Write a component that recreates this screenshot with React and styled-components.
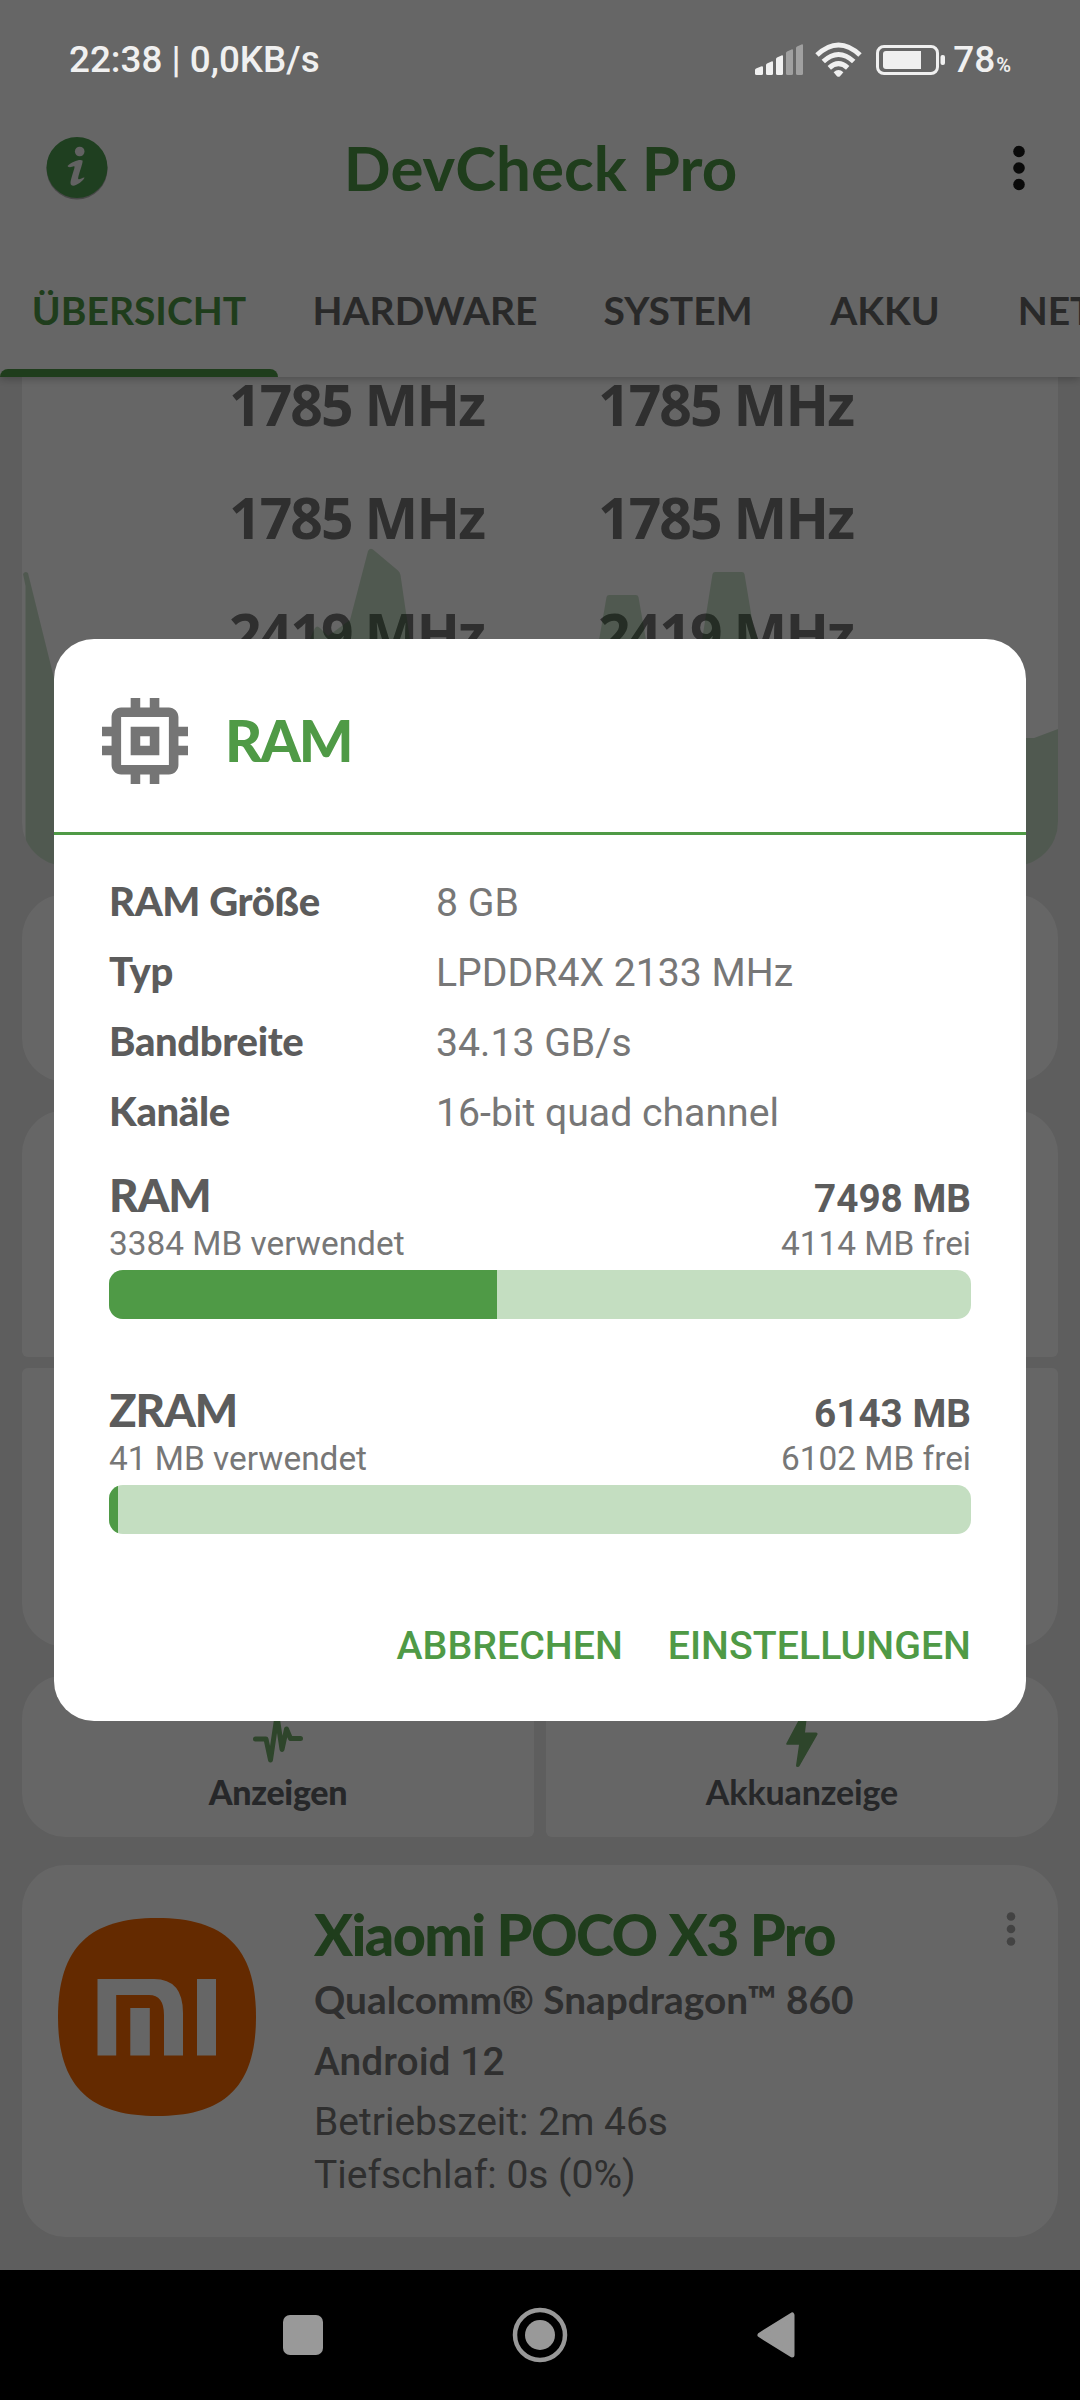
import React from 'react';
import styled, { createGlobalStyle } from 'styled-components';

const GREEN = '#4f9a46';

const GlobalStyle = createGlobalStyle`
  * {
    box-sizing: border-box;
  }

  body {
    margin: 0;
    background: #000000;
    font-family: Roboto, sans-serif;
  }
`;

const Screen = styled.div`
  position: relative;
  display: flex;
  flex-direction: column;
  width: 1080px;
  height: 2400px;
  overflow: hidden;
  background: #ebebeb;
`;

/* status bar */

const StatusBar = styled.div`
  position: absolute;
  z-index: 3;
  top: 0;
  left: 0;
  display: flex;
  align-items: center;
  justify-content: space-between;
  width: 100%;
  height: 90px;
  padding: 29px 69px 0 69px;
  color: #f0f0f0;
`;

const Clock = styled.span`
  font-size: 36.8px;
  font-weight: 500;
  line-height: 64px;
  white-space: pre;
`;

const StatusIcons = styled.div`
  display: flex;
  align-items: center;
  height: 64px;
`;

const SignalSvg = styled.svg`
  margin-right: 11px;
`;

const WifiSvg = styled.svg`
  margin-right: 14px;
`;

const BatteryLevel = styled.div`
  display: flex;
  align-items: baseline;
  height: 64px;
  margin-left: 7px;
  font-size: 37px;
  font-weight: 500;
  line-height: 64px;
`;

const Percent = styled.span`
  margin-left: 1px;
  font-size: 20px;
  font-weight: 600;
  line-height: 1;
`;

/* header */

const Header = styled.header`
  position: relative;
  z-index: 1;
  flex: none;
  height: 377px;
  padding-top: 90px;
  background: #ffffff;
  box-shadow: 0 2px 8px rgba(0, 0, 0, 0.25);
`;

const Toolbar = styled.div`
  display: grid;
  grid-template-columns: 64px 1fr 64px;
  align-items: center;
  justify-items: center;
  height: 154px;
  padding: 1px 44px 0 45px;
`;

const AppTitle = styled.h1`
  margin: -2px 0 0;
  font-family: Lato, sans-serif;
  font-size: 61.8px;
  font-weight: 700;
  color: ${GREEN};
`;

const ToolbarMenu = styled.svg`
  justify-self: end;
  margin: 1px 10px 0 0;
`;

const Tabs = styled.nav`
  display: flex;
  width: 1300px;
  height: 133px;
`;

const Tab = styled.div`
  display: flex;
  flex: none;
  flex-direction: column;
  width: ${(props) => props.$width}px;
  font-family: Lato, sans-serif;
  font-size: 39px;
  font-weight: 700;
  line-height: 132px;
  text-align: center;
  color: ${(props) => (props.$active ? GREEN : '#686868')};

  &::after {
    content: '';
    height: 8px;
    margin-top: -7px;
    border-radius: 8px 8px 0 0;
    background: ${(props) => (props.$active ? GREEN : 'transparent')};
  }
`;

/* overview cards */

const Content = styled.main`
  display: flex;
  flex: none;
  flex-direction: column;
  gap: 28px;
  height: 1893px;
  padding: 0 22px;
  overflow: hidden;
`;

const Card = styled.section`
  flex: none;
  height: ${(props) => props.$height}px;
  border-radius: 44px;
  background: #ffffff;
`;

const CpuCard = styled(Card)`
  position: relative;
  overflow: hidden;
  border-radius: 0 0 44px 44px;
`;

const Frequencies = styled.div`
  display: grid;
  grid-template-columns: 252px 252px;
  grid-template-rows: 113px 113px 119px;
  justify-content: center;
  column-gap: 117px;
  margin-top: -30px;
  padding-left: 2px;
`;

const Frequency = styled.div`
  display: flex;
  align-items: center;
  justify-content: center;
  font-family: 'Open Sans', sans-serif;
  font-size: 57px;
  font-weight: 700;
  letter-spacing: -1.9px;
  white-space: nowrap;
  color: #757575;
`;

const LoadChart = styled.svg`
  position: absolute;
  top: 0;
  left: 0;
`;

const TileGrid = styled.div`
  display: grid;
  grid-template-columns: 1fr 1fr;
  grid-template-rows: ${(props) => props.$rows};
  gap: 11px 12px;
  flex: none;
  overflow: hidden;
  border-radius: 44px;
`;

const Tile = styled.div`
  display: flex;
  flex-direction: column;
  align-items: center;
  justify-content: flex-end;
  padding-bottom: 25px;
  border-radius: 6px;
  background: #ffffff;
`;

const TileLabel = styled.span`
  margin-top: 4px;
  font-family: Lato, sans-serif;
  font-size: 34px;
  font-weight: ${(props) => (props.$heavy ? 900 : 700)};
  letter-spacing: ${(props) => (props.$heavy ? -0.3 : -0.1)}px;
  line-height: 40px;
  color: #606266;
`;

const DeviceCard = styled(Card)`
  display: flex;
  align-items: flex-start;
  padding: 34px 41px 0 36px;
`;

const LogoSvg = styled.svg`
  flex: none;
  margin: 19px 58px 0 0;
`;

const DeviceInfo = styled.div`
  flex: 1;
  font-size: 39px;
  color: #757575;
`;

const DeviceName = styled.div`
  font-family: Lato, sans-serif;
  font-size: 57.6px;
  font-weight: 900;
  letter-spacing: -1.65px;
  line-height: 70px;
  color: ${GREEN};
`;

const Chipset = styled.div`
  font-family: Lato, sans-serif;
  font-size: 38.8px;
  font-weight: 700;
  line-height: 60px;
`;

const AndroidVersion = styled.div`
  font-weight: 500;
  line-height: 67px;
`;

const DeviceStat = styled.div`
  line-height: 53px;
`;

const CardMenu = styled.svg`
  margin-top: 12px;
`;

/* dialog */

const Scrim = styled.div`
  position: absolute;
  z-index: 2;
  top: 0;
  left: 0;
  display: flex;
  align-items: center;
  justify-content: center;
  width: 1080px;
  height: 2270px;
  padding-top: 90px;
  background: rgba(0, 0, 0, 0.6);
`;

const Dialog = styled.div`
  width: 972px;
  height: 1082px;
  border-radius: 40px;
  background: #ffffff;
`;

const DialogHeader = styled.div`
  display: flex;
  align-items: center;
  height: 196px;
  padding: 10px 0 0 48px;
  border-bottom: 3px solid ${GREEN};
`;

const DialogTitle = styled.h2`
  margin: -2px 0 0 37px;
  font-family: Lato, sans-serif;
  font-size: 57.6px;
  font-weight: 900;
  letter-spacing: -2px;
  color: ${GREEN};
`;

const DialogBody = styled.div`
  padding: 30px 55px 0;
`;

const DetailRow = styled.div`
  display: grid;
  grid-template-columns: 327px 1fr;
  align-items: baseline;
  height: 70px;
  line-height: 72px;
`;

const DetailLabel = styled.span`
  font-family: Lato, sans-serif;
  font-size: 40px;
  font-weight: 900;
  letter-spacing: -0.35px;
  color: #5c5c5c;
`;

const DetailValue = styled.span`
  font-size: 39.2px;
  color: #777777;
`;

const Memory = styled.div`
  height: 215px;
  padding-top: 21px;
`;

const MemoryHead = styled.div`
  display: flex;
  align-items: baseline;
  justify-content: space-between;
  height: 59px;
  line-height: 57px;
  color: #5c5c5c;
`;

const MemoryName = styled.span`
  font-family: Lato, sans-serif;
  font-size: 45.6px;
  font-weight: 900;
  letter-spacing: -1.2px;
`;

const MemoryTotal = styled.span`
  font-size: 38.7px;
  font-weight: 700;
`;

const MemoryUsage = styled.div`
  display: flex;
  justify-content: space-between;
  font-size: 33.4px;
  line-height: 38px;
  color: #777777;
`;

const Bar = styled.div`
  height: 49px;
  margin-top: 7px;
  overflow: hidden;
  border-radius: 14px;
  background: #c4dec1;
`;

const BarFill = styled.div`
  height: 100%;
  background: ${GREEN};
`;

const Actions = styled.div`
  display: flex;
  justify-content: flex-end;
  gap: 45px;
  padding-top: 47px;
`;

const ActionButton = styled.button`
  padding: 0;
  border: none;
  background: none;
  font-family: Roboto, sans-serif;
  font-size: 39.3px;
  font-weight: 500;
  line-height: 48px;
  color: ${GREEN};
`;

/* system navigation */

const NavBar = styled.div`
  display: flex;
  flex: none;
  align-items: center;
  justify-content: center;
  gap: 189px;
  height: 130px;
  padding-right: 2px;
  background: #000000;
`;

const tabs = [
  { label: 'ÜBERSICHT', width: 278, active: true },
  { label: 'HARDWARE', width: 294 },
  { label: 'SYSTEM', width: 212 },
  { label: 'AKKU', width: 202 },
  { label: 'NETZWERK', width: 278 },
];

const frequencies = ['1785 MHz', '1785 MHz', '1785 MHz', '1785 MHz', '2419 MHz', '2419 MHz'];

const details = [
  ['RAM Größe', '8 GB'],
  ['Typ', 'LPDDR4X 2133 MHz'],
  ['Bandbreite', '34.13 GB/s'],
  ['Kanäle', '16-bit quad channel'],
];

const memories = [
  { name: 'RAM', total: 7498, used: 3384 },
  { name: 'ZRAM', total: 6143, used: 41 },
];

const SignalIcon = () => (
  <SignalSvg width="49" height="32" viewBox="0 0 49 32" fill="#f0f0f0">
    <path d="M0 26q0-1 1-1.600l5-2q2-.6 2 1V29.500q0 1.500-1.500 1.500h-5q-1.500 0-1.500-1.500z" />
    <path d="M11 21q0-1 1-1.600l4.500-2q1.500-.5 1.500 1V29.500q0 1.500-1.500 1.500h-4q-1.500 0-1.500-1.500z" />
    <path d="M21 15q0-1 1-1.600l4.500-2q1.500-.5 1.500 1V29.500q0 1.500-1.500 1.500h-4q-1.500 0-1.500-1.500z" />
    <path opacity="0.42" d="M31 9q0-1 1-1.600l4.500-2q1.500-.5 1.500 1V29.500q0 1.500-1.500 1.500h-4q-1.500 0-1.500-1.500z" />
    <path opacity="0.42" d="M41 4q0-1 1-1.600l4.500-2q1.500-.5 1.500 1V29.500q0 1.500-1.500 1.500h-4q-1.500 0-1.500-1.500z" />
  </SignalSvg>
);

const WifiIcon = () => (
  <WifiSvg width="47" height="36" viewBox="0 0 47 36" fill="none" stroke="#f0f0f0" strokeWidth="5">
    <path d="M2 13Q23.500-7 45 13" />
    <path d="M8.300 19.500Q23.500 5.500 38.700 19.500" />
    <path d="M14.300 25.800Q23.500 17.500 32.700 25.800" />
    <path d="M18.600 30.300Q23.500 25.500 28.400 30.300L25 34.200Q23.500 35.500 22 34.200Z" fill="#f0f0f0" stroke="none" />
  </WifiSvg>
);

const BatteryIcon = () => (
  <svg width="70" height="32" viewBox="0 0 70 32" fill="#f0f0f0">
    <rect x="1.500" y="2.500" width="60" height="27" rx="6.500" fill="none" stroke="#f0f0f0" strokeWidth="3" />
    <path d="M10 7H45V25H10Q7 25 7 22V10Q7 7 10 7Z" />
    <rect x="64.500" y="11" width="4.500" height="10" rx="2" />
  </svg>
);

const InfoIcon = () => (
  <svg width="64" height="66" viewBox="0 0 64 66">
    <circle cx="32" cy="34" r="30.500" fill="#000000" opacity="0.3" />
    <circle cx="32" cy="32.500" r="30.500" fill="#4f9f52" />
    <circle cx="34.700" cy="16.500" r="4.800" fill="#f4f4f4" />
    <path
      d="M22.500 31C27 26.500 35 23.800 37.500 25.500C38.500 27.500 32.500 42 33.300 44C34.300 45.200 37 42.500 39.500 42.500C38.500 46.500 26 55 25.500 48C25.500 44 30 33 29.500 31.500C28.500 30 25 34 22.500 31Z"
      fill="#f4f4f4"
    />
  </svg>
);

const MoreIcon = () => (
  <ToolbarMenu width="14" height="48" viewBox="0 0 14 48" fill="#1a1a1a">
    <circle cx="7" cy="7.500" r="5.800" />
    <circle cx="7" cy="24" r="5.800" />
    <circle cx="7" cy="40.500" r="5.800" />
  </ToolbarMenu>
);

const ChipIcon = () => (
  <svg width="86" height="86" viewBox="3 3 18 18" fill="#757575">
    <path d="M15 9H9v6h6V9zm-2 4h-2v-2h2v2zm8-2V9h-2V7c0-1.100-.9-2-2-2h-2V3h-2v2h-2V3H9v2H7c-1.100 0-2 .9-2 2v2H3v2h2v2H3v2h2v2c0 1.100.9 2 2 2h2v2h2v-2h2v2h2v-2h2c1.100 0 2-.9 2-2v-2h2v-2h-2v-2h2zm-4 6H7V7h10v10z" />
  </svg>
);

const PulseIcon = () => (
  <svg width="60" height="60" viewBox="0 0 60 60" fill="none" stroke="#73ac6c" strokeWidth="5" strokeLinecap="round" strokeLinejoin="round">
    <path d="M7.500 31H18L22.500 52L29 8L34 41.500L38.500 21L42.500 30.500H52.500" />
  </svg>
);

const BoltIcon = () => (
  <svg width="60" height="64" viewBox="0 0 60 64" fill="#73ac6c">
    <path d="M31 8L14.500 39Q13.500 40.800 15.500 40.800H27L24 61.500Q24 63 25.500 63Q27 63 27.500 62L45.500 30.500Q46 28.500 44 28.500H33L35.500 8Z" />
  </svg>
);

const MiLogo = () => (
  <LogoSvg width="198" height="198" viewBox="0 0 198 198">
    <path
      d="M99 0C165 0 198 28 198 99C198 170 165 198 99 198C33 198 0 170 0 99C0 28 33 0 99 0Z"
      fill="#fa6900"
    />
    <g fill="#ffffff">
      <path d="M39.500 61H96Q125 61 125 95V137.500H106V97Q106 77 91 77H58.200V137.500H39.500Z" />
      <rect x="72.300" y="90" width="19.500" height="47.500" />
      <rect x="139" y="61" width="19" height="76.500" />
    </g>
  </LogoSvg>
);

const CpuLoadChart = () => (
  <LoadChart width="1036" height="489" viewBox="22 377 1036 489" fill="#006600" fillOpacity="0.21">
    <path d="M25.500 866V586L23 574Q25 570.500 28 573L54 678L100 760L200 760L285 700L313 632L315 628Q317 625 320 628L328 636L350 620L368 551Q370 547.500 373 549.500L398 570.500Q400 572 400.500 575L410 640L430 760H570L599 640L606.500 597Q607 595 609 595H636Q638 595 638.500 597L646 640L670 720L702 640L712.500 574Q713 572 715 572H742Q744 572 744.500 574L753 625L790 738H1034L1058 729V866Z" />
  </LoadChart>
);

const MemoryMeter = ({ name, total, used }) => {
  const percent = Math.round((used / total) * 100);

  return (
    <Memory>
      <MemoryHead>
        <MemoryName>{name}</MemoryName>
        <MemoryTotal>{total} MB</MemoryTotal>
      </MemoryHead>
      <MemoryUsage>
        <span>{used} MB verwendet</span>
        <span>{total - used} MB frei</span>
      </MemoryUsage>
      <Bar>
        <BarFill style={{ width: `${percent}%` }} />
      </Bar>
    </Memory>
  );
};

const RamDialog = () => (
  <Dialog>
    <DialogHeader>
      <ChipIcon />
      <DialogTitle>RAM</DialogTitle>
    </DialogHeader>
    <DialogBody>
      {details.map(([label, value]) => (
        <DetailRow key={label}>
          <DetailLabel>{label}</DetailLabel>
          <DetailValue>{value}</DetailValue>
        </DetailRow>
      ))}
      {memories.map((memory) => (
        <MemoryMeter key={memory.name} {...memory} />
      ))}
      <Actions>
        <ActionButton>ABBRECHEN</ActionButton>
        <ActionButton>EINSTELLUNGEN</ActionButton>
      </Actions>
    </DialogBody>
  </Dialog>
);

const App = () => (
  <>
    <GlobalStyle />
    <Screen>
      <StatusBar>
        <Clock>22:38 | 0,0KB/s</Clock>
        <StatusIcons>
          <SignalIcon />
          <WifiIcon />
          <BatteryIcon />
          <BatteryLevel>
            78
            <Percent>%</Percent>
          </BatteryLevel>
        </StatusIcons>
      </StatusBar>

      <Header>
        <Toolbar>
          <InfoIcon />
          <AppTitle>DevCheck Pro</AppTitle>
          <MoreIcon />
        </Toolbar>
        <Tabs>
          {tabs.map((tab) => (
            <Tab key={tab.label} $width={tab.width} $active={tab.active}>
              {tab.label}
            </Tab>
          ))}
        </Tabs>
      </Header>

      <Content>
        <CpuCard $height={489}>
          <Frequencies>
            {frequencies.map((frequency, index) => (
              <Frequency key={index}>{frequency}</Frequency>
            ))}
          </Frequencies>
          <CpuLoadChart />
        </CpuCard>
        <Card $height={188} />
        <TileGrid $rows="247px 279px">
          <Tile />
          <Tile />
          <Tile />
          <Tile />
        </TileGrid>
        <TileGrid $rows="162px">
          <Tile>
            <PulseIcon />
            <TileLabel $heavy>Anzeigen</TileLabel>
          </Tile>
          <Tile>
            <BoltIcon />
            <TileLabel>Akkuanzeige</TileLabel>
          </Tile>
        </TileGrid>
        <DeviceCard $height={372}>
          <MiLogo />
          <DeviceInfo>
            <DeviceName>Xiaomi POCO X3 Pro</DeviceName>
            <Chipset>Qualcomm® Snapdragon™ 860</Chipset>
            <AndroidVersion>Android 12</AndroidVersion>
            <DeviceStat>Betriebszeit: 2m 46s</DeviceStat>
            <DeviceStat>Tiefschlaf: 0s (0%)</DeviceStat>
          </DeviceInfo>
          <CardMenu width="12" height="36" viewBox="0 0 12 36" fill="#a8a8a8">
            <circle cx="6" cy="5.500" r="4.300" />
            <circle cx="6" cy="18" r="4.300" />
            <circle cx="6" cy="30.500" r="4.300" />
          </CardMenu>
        </DeviceCard>
      </Content>

      <Scrim>
        <RamDialog />
      </Scrim>

      <NavBar>
        <svg width="40" height="40" viewBox="0 0 40 40">
          <rect width="40" height="40" rx="7" fill="#999999" />
        </svg>
        <svg width="56" height="56" viewBox="0 0 56 56">
          <circle cx="28" cy="28" r="25" fill="none" stroke="#999999" strokeWidth="4.500" />
          <circle cx="28" cy="28" r="15" fill="#999999" />
        </svg>
        <svg width="38" height="48" viewBox="0 0 38 48">
          <path d="M3 24L35 4V44Z" fill="#999999" stroke="#999999" strokeWidth="5" strokeLinejoin="round" />
        </svg>
      </NavBar>
    </Screen>
  </>
);

export default App;
